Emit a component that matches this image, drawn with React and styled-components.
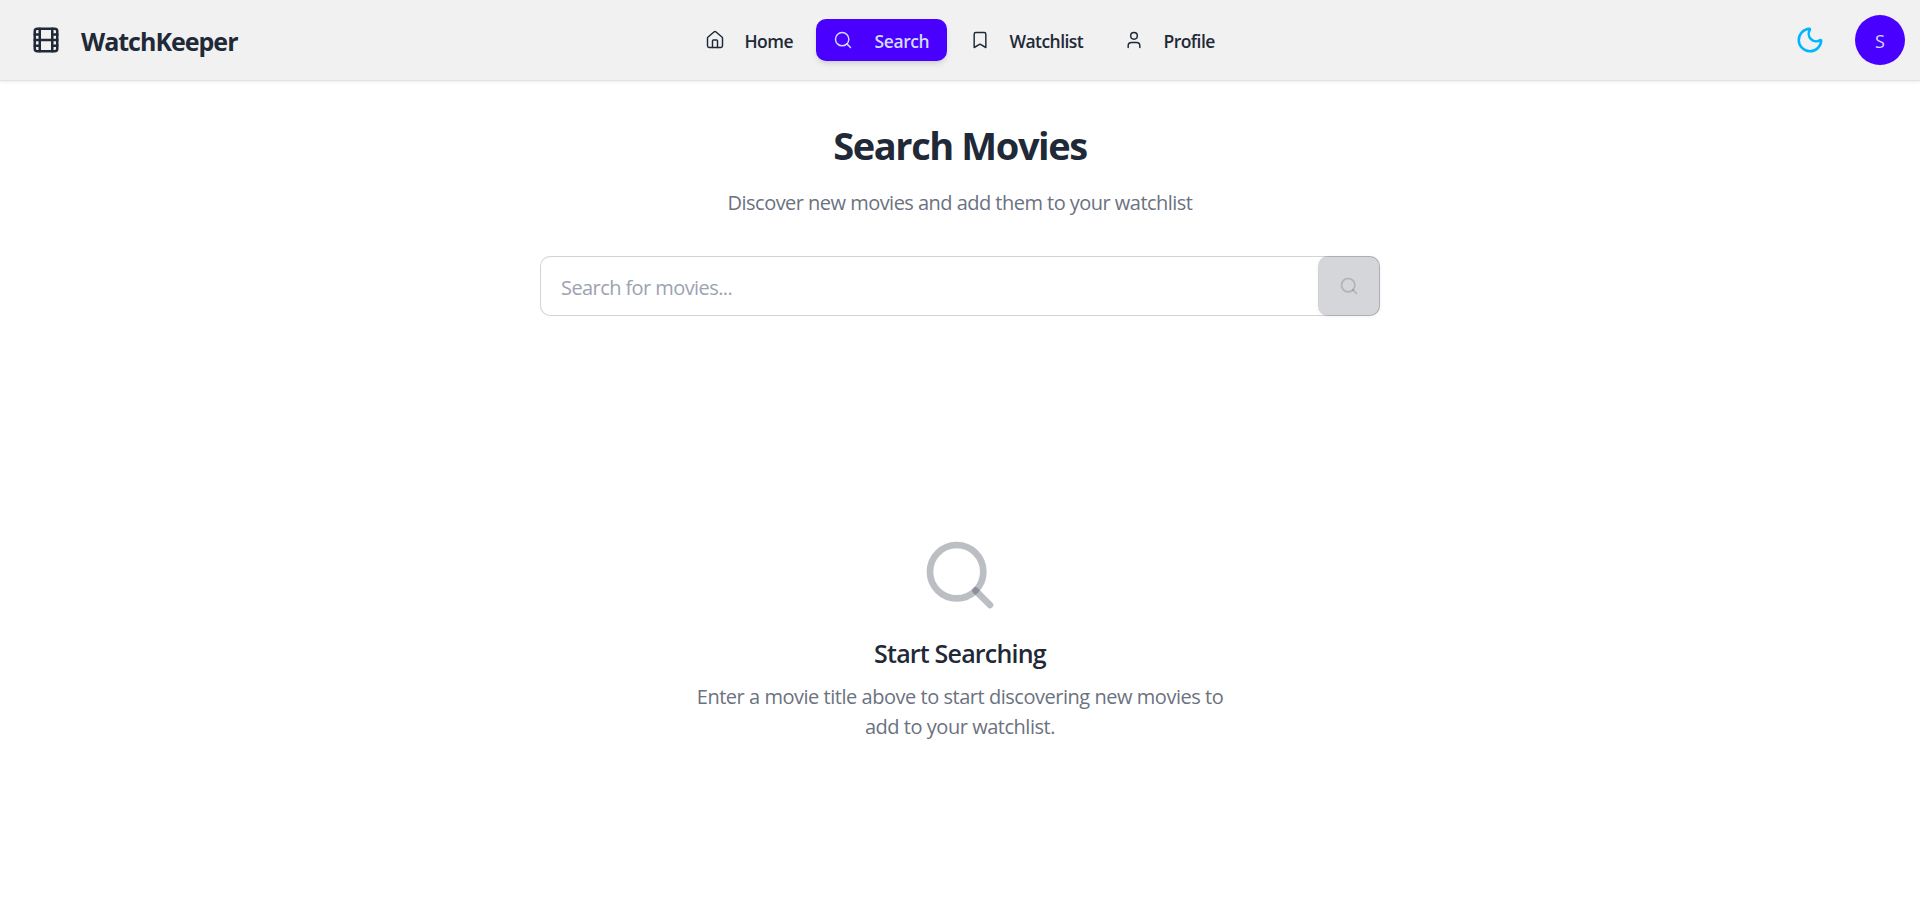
import React from "react";
import styled, { createGlobalStyle, css } from "styled-components";
import { Film, House, Search, Bookmark, User, Moon } from "lucide-react";

const GlobalStyle = createGlobalStyle`
  *, *::before, *::after { box-sizing: border-box; }
  body {
    margin: 0;
    background: #ffffff;
    color: #1f2937;
    font-family: "Open Sans", "Noto Sans", sans-serif;
    font-size: 16px;
    line-height: 1.5;
  }
  svg { display: block; flex-shrink: 0; }
  h1, h2, p { margin: 0; }
`;

const Page = styled.div`
  min-height: 920px;
`;

const Header = styled.header`
  display: grid;
  grid-template-columns: 1fr auto 1fr;
  align-items: center;
  height: 81px;
  padding: 0 15px;
  background: #f1f1f1;
  border-bottom: 1px solid #e2e2e3;
  box-shadow: 0 1px 3px rgba(0, 0, 0, 0.08);
`;

const Brand = styled.a`
  display: flex;
  align-items: center;
  gap: 20px;
  padding-left: 16px;
`;

const BrandName = styled.span`
  padding-top: 4px;
  font-size: 25px;
  font-weight: 700;
  letter-spacing: -1px;
`;

const Nav = styled.nav`
  display: flex;
  gap: 6px;
`;

const NavItem = styled.a`
  display: flex;
  align-items: center;
  width: ${({ $width }) => $width}px;
  height: 42px;
  padding-left: 17px;
  gap: ${({ $active }) => ($active ? 22 : 20)}px;
  border-radius: 10px;
  font-size: 17.5px;
  font-weight: 600;
  letter-spacing: -0.55px;
  white-space: nowrap;

  ${({ $active }) =>
    $active &&
    css`
      background: #4a00ff;
      color: #d1dbff;
      letter-spacing: -0.4px;
      box-shadow: 0 4px 6px -1px rgba(0, 0, 0, 0.1), 0 2px 4px -2px rgba(0, 0, 0, 0.1);
    `}
`;

const NavLabel = styled.span`
  padding-top: 3px;
`;

const Actions = styled.div`
  display: flex;
  align-items: center;
  justify-content: flex-end;
  gap: 30px;
`;

const ThemeToggle = styled.span`
  color: #00b5ff;
`;

const Avatar = styled.div`
  display: flex;
  align-items: center;
  justify-content: center;
  width: 50px;
  height: 50px;
  padding-top: 3px;
  border-radius: 50%;
  background: #4a00ff;
  color: #d1dbff;
  font-size: 18px;
`;

const Main = styled.main`
  display: flex;
  flex-direction: column;
  align-items: center;
  padding-top: 39px;
`;

const Title = styled.h1`
  font-size: 38px;
  line-height: 50px;
  font-weight: 700;
  letter-spacing: -1.4px;
`;

const Subtitle = styled.p`
  margin-top: 18px;
  font-size: 20px;
  line-height: 30px;
  letter-spacing: -0.53px;
  color: #6b7280;
`;

const SearchBar = styled.form`
  display: flex;
  width: 840px;
  height: 60px;
  margin-top: 38px;
  border-radius: 10px;
  box-shadow: inset 0 0 0 1px #d2d3d7;
`;

const SearchInput = styled.input`
  flex: 1;
  min-width: 0;
  padding: 4px 20px 0 21px;
  border: 0;
  outline: 0;
  background: transparent;
  font: inherit;
  font-size: 20px;
  letter-spacing: -0.58px;

  &::placeholder { color: #9ca3af; opacity: 1; }
`;

const SearchButton = styled.button`
  display: flex;
  align-items: center;
  justify-content: center;
  width: 62px;
  padding: 0;
  border: 1px solid rgba(31, 41, 55, 0.02);
  border-radius: 10px;
  background: rgba(43, 52, 64, 0.2);
  color: rgba(31, 41, 55, 0.2);
  box-shadow: 0 1px 4px rgba(0, 0, 0, 0.05);
`;

const EmptyState = styled.section`
  display: flex;
  flex-direction: column;
  align-items: center;
  width: 560px;
  margin-top: 219px;
  text-align: center;
`;

const EmptyIcon = styled.div`
  color: rgba(31, 41, 55, 0.3);
`;

const EmptyTitle = styled.h2`
  margin-top: 21px;
  font-size: 25px;
  line-height: 35px;
  font-weight: 600;
  letter-spacing: -0.8px;
`;

const EmptyText = styled.p`
  margin-top: 11px;
  font-size: 20px;
  line-height: 30px;
  letter-spacing: -0.47px;
  color: #6b7280;
`;

const NAV_ITEMS = [
  { label: "Home", icon: House, width: 122 },
  { label: "Search", icon: Search, width: 131, active: true },
  { label: "Watchlist", icon: Bookmark, width: 148 },
  { label: "Profile", icon: User, width: 126 },
];

export default function App() {
  return (
    <Page>
      <GlobalStyle />
      <Header>
        <Brand>
          <Film size={30} />
          <BrandName>WatchKeeper</BrandName>
        </Brand>
        <Nav>
          {NAV_ITEMS.map(({ label, icon: Icon, width, active }) => (
            <NavItem key={label} $width={width} $active={active}>
              <Icon size={20} strokeWidth={1.75} />
              <NavLabel>{label}</NavLabel>
            </NavItem>
          ))}
        </Nav>
        <Actions>
          <ThemeToggle>
            <Moon size={30} />
          </ThemeToggle>
          <Avatar>S</Avatar>
        </Actions>
      </Header>
      <Main>
        <Title>Search Movies</Title>
        <Subtitle>Discover new movies and add them to your watchlist</Subtitle>
        <SearchBar>
          <SearchInput placeholder="Search for movies..." />
          <SearchButton type="button" disabled>
            <Search size={20} />
          </SearchButton>
        </SearchBar>
        <EmptyState>
          <EmptyIcon>
            <Search size={80} />
          </EmptyIcon>
          <EmptyTitle>Start Searching</EmptyTitle>
          <EmptyText>
            Enter a movie title above to start discovering new movies to
            <br />
            add to your watchlist.
          </EmptyText>
        </EmptyState>
      </Main>
    </Page>
  );
}
